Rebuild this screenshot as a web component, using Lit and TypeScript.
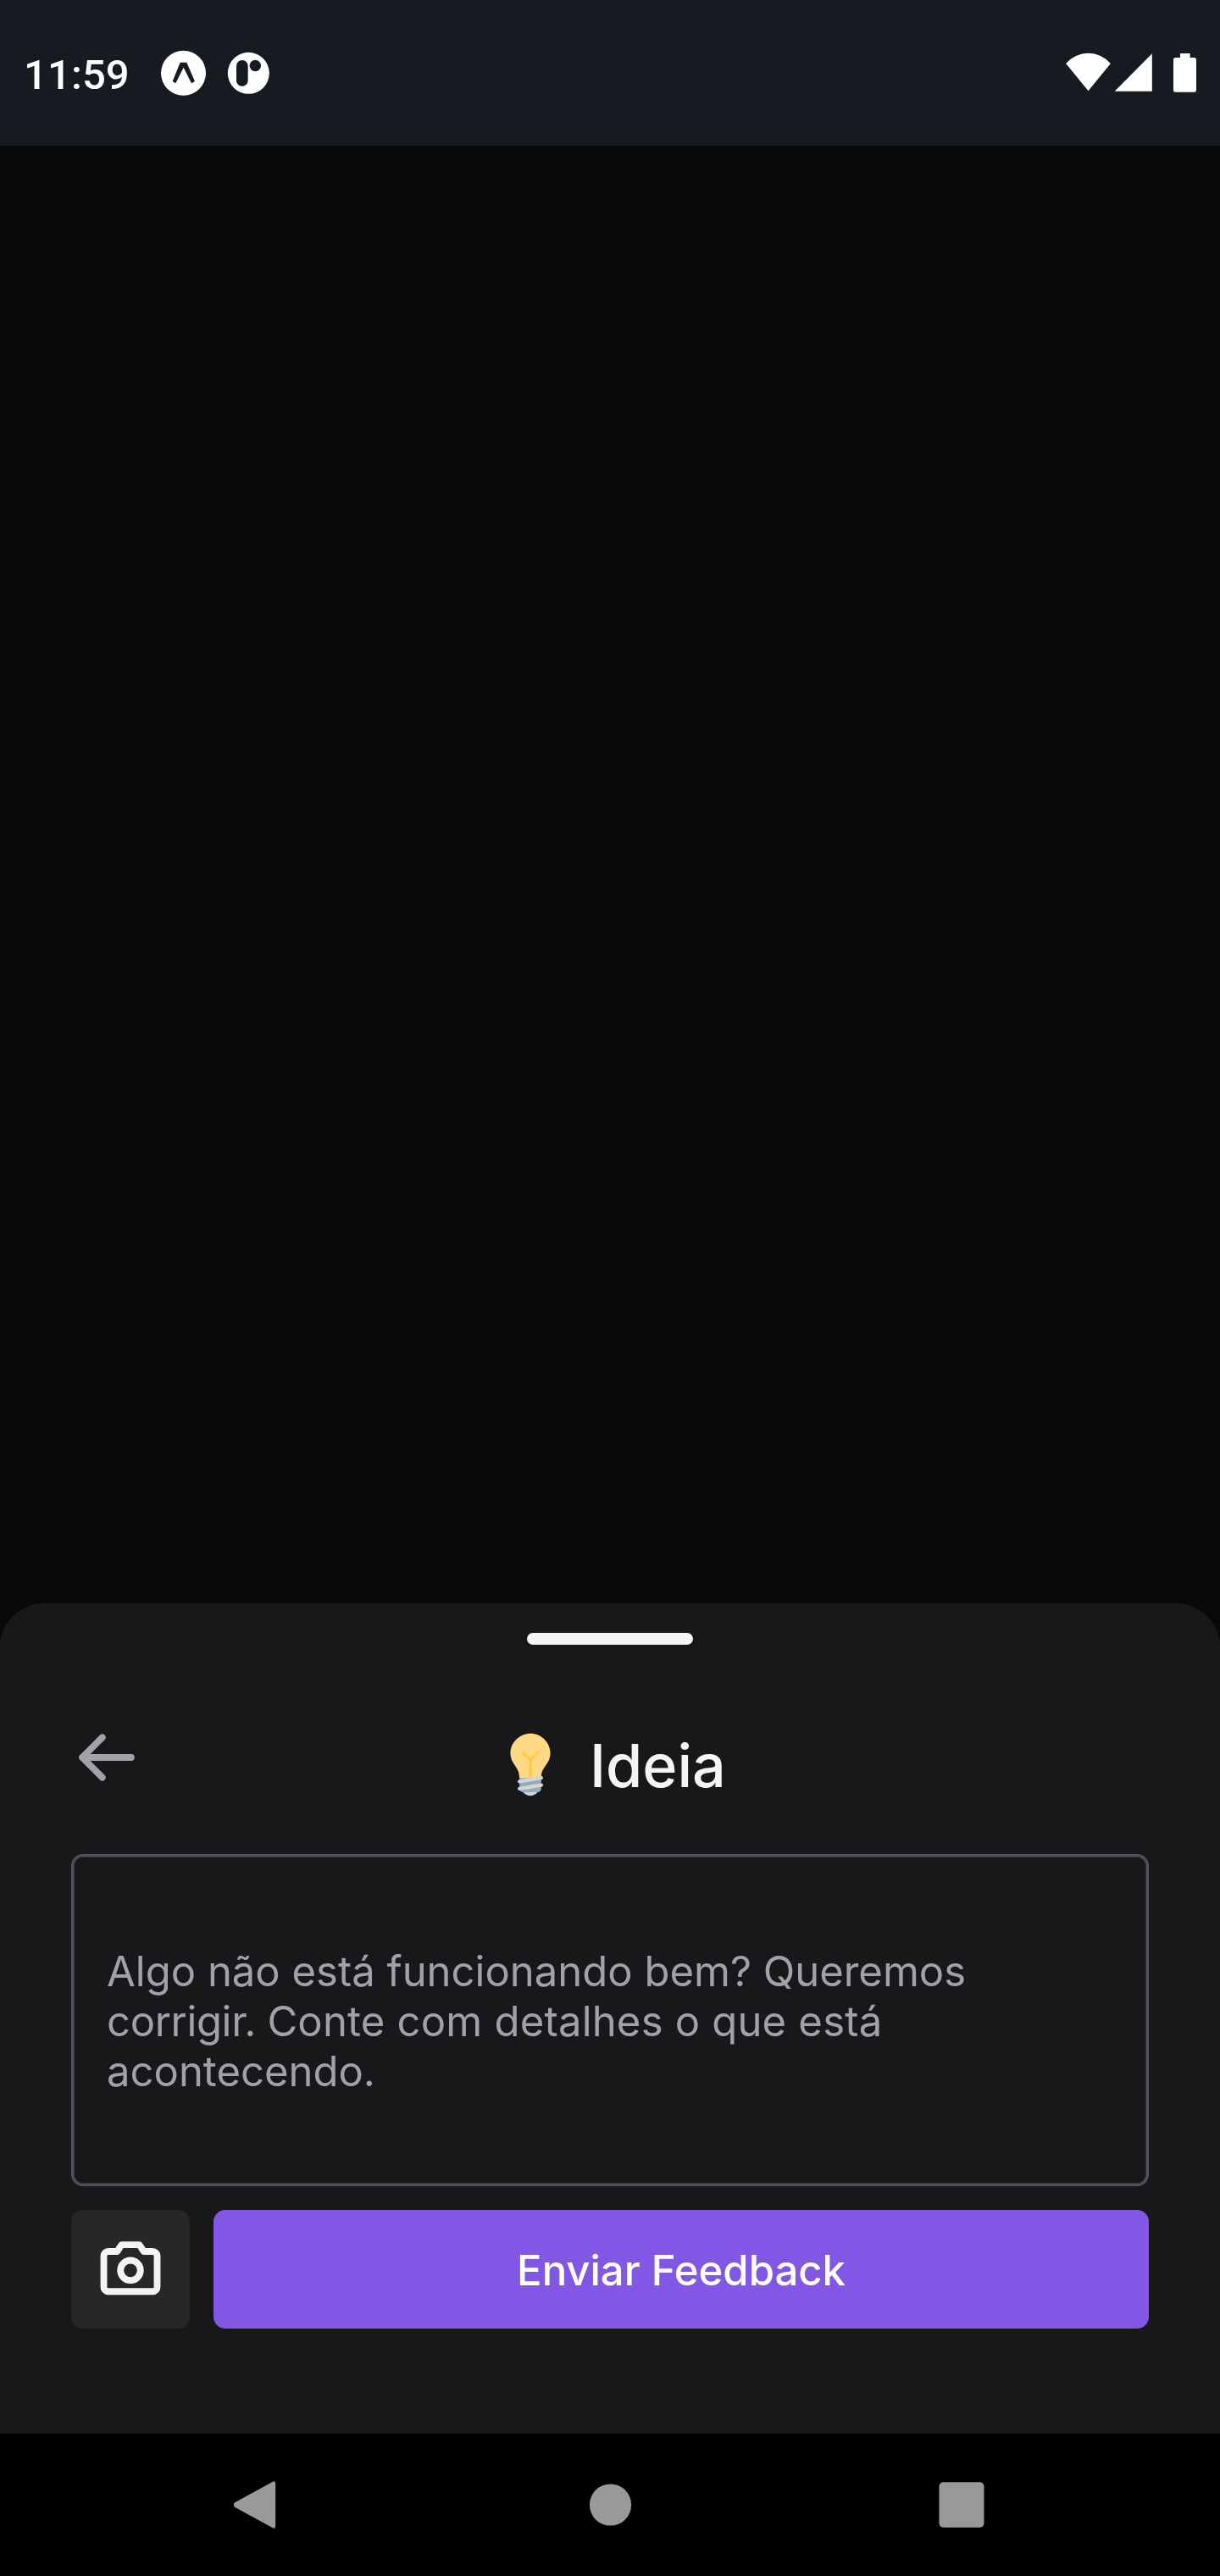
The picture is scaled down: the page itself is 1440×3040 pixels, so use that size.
import { LitElement, html, css } from "lit";
import { customElement, property } from "lit/decorators.js";

@customElement("status-bar")
class StatusBar extends LitElement {
  @property() time = "";

  static styles = css`
    :host {
      display: flex;
      align-items: flex-start;
      justify-content: space-between;
      height: 172px;
      box-sizing: border-box;
      background: #161b22;
      color: #fff;
    }
    .left,
    .right {
      display: flex;
      align-items: flex-start;
    }
    .time {
      font: 500 49px/57px Roboto, sans-serif;
      letter-spacing: 0.1px;
      margin: 60px 0 0 28px;
      width: 161px;
    }
    svg {
      display: block;
      fill: currentColor;
    }
    .app {
      margin-top: 59px;
    }
    .right {
      margin-top: 60px;
    }
    .cut {
      fill: #161b22;
    }
  `;

  render() {
    return html`
      <div class="left">
        <span class="time">${this.time}</span>
        <svg class="app" width="140" height="54" viewBox="567 87 420 162">
          <circle cx="649.5" cy="169" r="79.5" />
          <path class="cut" d="M638 131H661L690 198L678 205L650 149L622 205L611 198Z" />
          <circle cx="880" cy="169" r="73.5" />
          <rect class="cut" x="837" y="123" width="41" height="92" rx="20" />
          <circle class="cut" cx="904" cy="142.500" r="20" />
        </svg>
      </div>
      <svg class="right" width="190" height="54" viewBox="90 90 570 162">
        <path d="M193.500 232L114.500 135A103.600 103.600 0 0 1 272.500 135Z" />
        <path d="M287 233L419.500 100V233Z" />
        <path d="M519 99h35v15h14q8 0 8 8v107q0 7.500 -8 7.500h-65q-8 0 -8-7.500v-107q0-8 8-8h16Z" />
      </svg>
    `;
  }
}

@customElement("feedback-sheet")
class FeedbackSheet extends LitElement {
  @property() heading = "";
  @property() action = "";

  static styles = css`
    :host {
      display: flex;
      flex-direction: column;
      box-sizing: border-box;
      height: 980px;
      padding: 35px 84px 0;
      background: #18181b;
      border-radius: 52px 52px 0 0;
      font-family: Inter, sans-serif;
    }
    .handle {
      align-self: center;
      width: 196px;
      height: 14px;
      border-radius: 7px;
      background: #f4f4f5;
    }
    .header {
      display: grid;
      grid-template-columns: 84px 1fr 84px;
      align-items: start;
      height: 156px;
      margin-top: 91px;
    }
    svg {
      display: block;
    }
    .stroke {
      fill: none;
      stroke: currentColor;
      stroke-width: 24;
      stroke-linecap: round;
      stroke-linejoin: round;
    }
    .back {
      color: #a1a1aa;
    }
    .title {
      display: flex;
      justify-content: flex-start;
      padding-left: 416px;
    }
    .bulb {
      margin-top: 9px;
    }
    .heading {
      margin: 10px 0 0 28px;
      font-size: 70px;
      line-height: 84px;
      font-weight: 500;
      color: #f4f4f5;
      white-space: nowrap;
    }
    .field {
      display: flex;
      flex-direction: column;
      justify-content: center;
      box-sizing: border-box;
      height: 392px;
      border: 3px solid #52525b;
      border-radius: 14px;
      box-shadow: inset 0 0 0 1px #35353b;
      padding: 2px 39px 0;
      font-size: 49px;
      line-height: 59px;
      color: #a1a1aa;
    }
    .line {
      white-space: nowrap;
    }
    .tight {
      letter-spacing: -0.35px;
    }
    .wide {
      letter-spacing: 0.2px;
    }
    .actions {
      display: flex;
      gap: 28px;
      margin-top: 28px;
      height: 140px;
    }
    .shot,
    .send {
      display: flex;
      align-items: center;
      justify-content: center;
      border: 0;
      padding: 0;
      border-radius: 14px;
      font: inherit;
    }
    .shot {
      width: 140px;
      background: #27272a;
      color: #f4f4f5;
    }
    .send {
      flex: 1;
      padding-top: 2px;
      background: #8257e5;
      color: #fff;
      font-size: 49px;
      font-weight: 500;
    }
  `;

  render() {
    return html`
      <div class="handle"></div>
      <div class="header">
        <svg class="back" width="84" height="84" viewBox="0 0 256 256">
          <path class="stroke" d="M216 128H40M112 56L40 128L112 200" />
        </svg>
        <div class="title">
          <svg class="bulb" width="84" height="84" viewBox="0 0 84 84">
            <g transform="translate(42 4.400) scale(2.140 2.110) translate(-18 0)">
              <path fill="#ffd983" d="M29 11.06c0 6.439-5 7.439-5 13.44 0 3.098-3.123 3.359-5.5 3.359-2.053 0-6.586-.779-6.586-3.361C11.914 18.5 7 17.5 7 11.06 7 5.029 12.285.14 18.083.14 23.883.14 29 5.029 29 11.06z" />
              <path fill="#ccd6dd" d="M22.167 32.5c0 .828-2.234 2.5-4.167 2.5-1.933 0-4.167-1.672-4.167-2.5 0-.828 2.233-.5 4.167-.5 1.933 0 4.167-.328 4.167.5z" />
              <path fill="#ffcc4d" d="M22.707 10.293c-.391-.391-1.023-.391-1.414 0L18 13.586l-3.293-3.293c-.391-.391-1.023-.391-1.414 0s-.391 1.023 0 1.414L17 15.414V26c0 .553.447 1 1 1s1-.447 1-1V15.414l3.707-3.707c.391-.391.391-1.023 0-1.414z" />
              <path fill="#99aab5" d="M24 31c0 1.104-.896 2-2 2h-8c-1.104 0-2-.896-2-2v-6h12v6z" />
              <path fill="none" stroke="#ccd6dd" stroke-width="2" stroke-linecap="round" d="M12 31L24 29M12 27L24 25" />
            </g>
          </svg>
          <span class="heading">${this.heading}</span>
        </div>
      </div>
      <div class="field">
        <div class="line">Algo não está funcionando bem? Queremos</div>
        <div class="line"><span class="tight">corrigir. </span><span class="wide">Conte com detalhes o que está</span></div>
        <div class="line">acontecendo.</div>
      </div>
      <div class="actions">
        <button class="shot">
          <svg width="84" height="84" viewBox="0 0 256 256">
            <path class="stroke" d="M208 208H48a16 16 0 0 1-16-16V80A16 16 0 0 1 48 64H80L96 40h64l16 24h32a16 16 0 0 1 16 16V192A16 16 0 0 1 208 208Z" />
            <circle class="stroke" cx="128" cy="132" r="36" />
          </svg>
        </button>
        <button class="send">${this.action}</button>
      </div>
    `;
  }
}

@customElement("nav-bar")
class NavBar extends LitElement {
  static styles = css`
    :host {
      display: flex;
      align-items: center;
      justify-content: space-between;
      box-sizing: border-box;
      height: 168px;
      padding: 0 263px 0 258px;
      background: #000;
    }
    svg {
      display: block;
      fill: #999;
    }
  `;

  render() {
    return html`
      <svg width="84" height="84" viewBox="0 0 84 84">
        <path d="M64.500 14.500Q67 13.500 67.200 17V67Q67 70.500 64.500 69.500L19.500 45Q16 42 19.500 39Z" />
      </svg>
      <svg width="84" height="84" viewBox="0 0 84 84">
        <circle cx="44.500" cy="42" r="24.600" />
      </svg>
      <svg width="84" height="84" viewBox="0 0 84 84">
        <rect x="15.500" y="15.300" width="53" height="53.400" rx="5" />
      </svg>
    `;
  }
}

@customElement("app-root")
class AppRoot extends LitElement {
  static styles = css`
    :host {
      display: flex;
      flex-direction: column;
      width: 1440px;
      height: 3040px;
      background: #09090a;
      overflow: hidden;
    }
    .canvas {
      flex: 1;
    }
  `;

  render() {
    return html`
      <status-bar time="11:59"></status-bar>
      <div class="canvas"></div>
      <feedback-sheet heading="Ideia" action="Enviar Feedback"></feedback-sheet>
      <nav-bar></nav-bar>
    `;
  }
}
